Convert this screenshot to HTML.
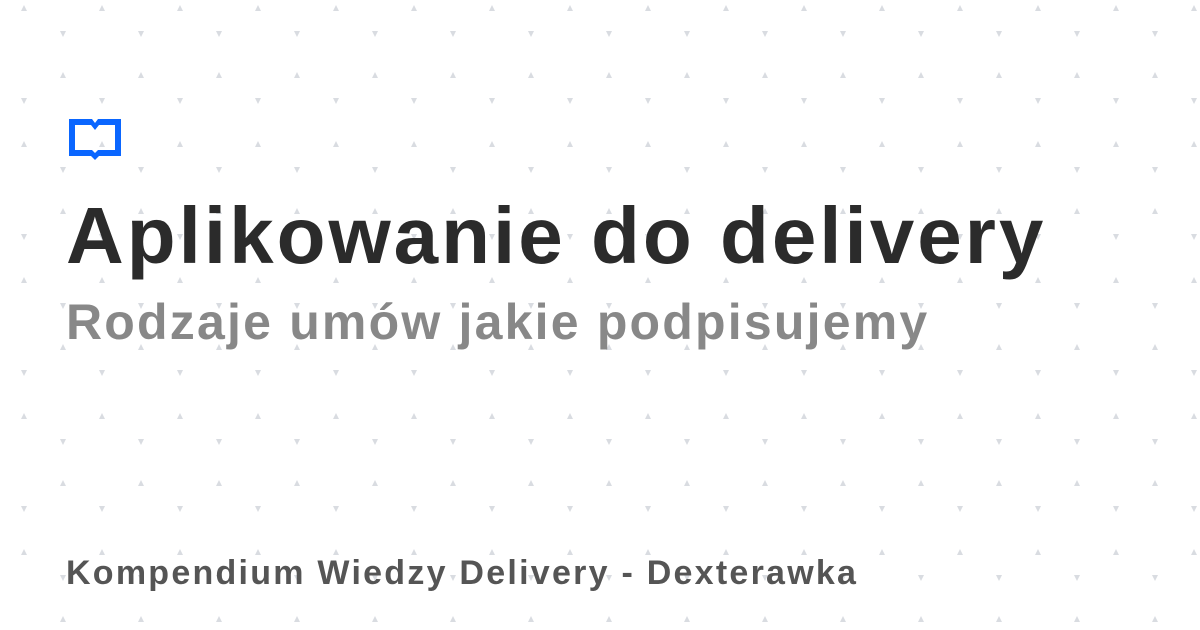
<!DOCTYPE html>
<html><head><meta charset="utf-8"><style>
html,body{margin:0;padding:0}
body{width:1200px;height:630px;position:relative;background:#fff;overflow:hidden;font-family:"Liberation Sans",sans-serif;font-weight:bold}
.t{position:absolute;left:66px;white-space:nowrap}
</style></head><body>
<svg width="1200" height="630" style="position:absolute;left:0;top:0">
<defs><pattern id="p" x="21" y="0" width="78" height="136" patternUnits="userSpaceOnUse">
<path d="M3 5 L6 11 L0 11Z M42 72 L45 78 L39 78Z M39 31 L45 31 L42 37Z M0 98 L6 98 L3 104Z" fill="#d9dce1"/>
</pattern></defs>
<rect width="1200" height="630" fill="url(#p)"/>
<path fill="#0a66ff" fill-rule="evenodd" d="M69 119 H92 L95 123 L98 119 H121 V156 H99 L95 160 L91 156 H69Z M75 125 V150 H92 L95 153 L98 150 H115 V125 H99 L95 130 L91 125Z"/>
</svg>
<div class="t" style="top:190px;font-size:80px;line-height:92px;color:#2b2b2b;letter-spacing:3px">Aplikowanie do delivery</div>
<div class="t" style="top:294px;font-size:50px;line-height:57px;color:#888;letter-spacing:2.2px">Rodzaje umów jakie podpisujemy</div>
<div class="t" style="top:554px;font-size:34px;line-height:39px;color:#555;letter-spacing:2.25px">Kompendium Wiedzy Delivery - Dexterawka</div>
</body></html>
